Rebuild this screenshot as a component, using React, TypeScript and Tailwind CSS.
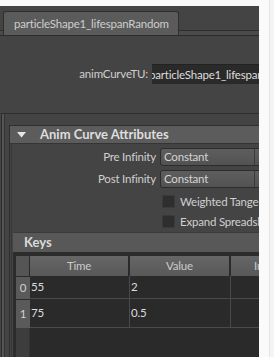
import React from "react";

const T = "text-[11.5px] tracking-[-0.2px]";

function Dropdown({ value }: { value: string }) {
  return (
    <div className="relative w-[120px] h-[18px] shrink-0 rounded-[3px] border border-[#2c2c2c] bg-gradient-to-b from-[#5e5e5e] to-[#525252] flex items-center">
      <span className="pl-[3px] text-[11.5px] tracking-[-0.2px] text-[#d4d4d4] leading-none">{value}</span>
      <div className="absolute left-[93px] top-0 bottom-0 w-px bg-[#3a3a3a]" />
      <svg className="absolute left-[96px] top-[6px]" width="5" height="6" viewBox="0 0 5 6">
        <path d="M2.5 0 L2.5 6" stroke="#cfcfcf" strokeWidth="1" />
      </svg>
    </div>
  );
}

function Checkbox({ label }: { label: string }) {
  return (
    <div className="flex items-center h-[13px]">
      <div className="w-[150px] shrink-0" />
      <div className="w-[13px] h-[13px] bg-[#2e2e2e] border border-[#3a3a3a] rounded-[1px] shrink-0" />
      <span className="ml-[5px] text-[11.5px] tracking-[-0.2px] text-[#d0d0d0] whitespace-nowrap leading-none">{label}</span>
    </div>
  );
}

export default function App() {
  return (
    <div className="w-[274px] h-[357px] bg-[#f9f9f9] flex overflow-hidden font-['Lato',sans-serif]">
      <div className="w-[259px] h-[351px] mt-[6px] bg-[#444444] flex flex-col overflow-hidden shrink-0">
        {/* tab strip */}
        <div className="h-[30px] flex items-end border-b border-[#2b2b2b] shrink-0">
          <div className="w-[3px] h-[5px] bg-[#4b4b4b] border-t border-[#2d2d2d]" />
          <div className="w-[176px] h-[24px] bg-[#5b5b5b] rounded-t-[3px] border border-b-0 border-[#2f2f2f] flex items-center pl-[10px]">
            <span className="text-[11.5px] tracking-[-0.2px] text-[#cdcdcd] whitespace-nowrap leading-none">particleShape1_lifespanRandom</span>
          </div>
          <div className="flex-1 h-[5px] bg-[#4b4b4b] border-t border-[#2d2d2d]" />
        </div>

        {/* animCurveTU row */}
        <div className="mt-[28px] flex items-center h-[20px] shrink-0">
          <div className="w-[148px] shrink-0 text-right text-[11.5px] tracking-[-0.2px] text-[#cfcfcf] whitespace-nowrap">animCurveTU:</div>
          <div className="ml-[4px] w-[120px] h-[20px] shrink-0 bg-[#2a2a2a] border-t border-[#222] overflow-hidden flex items-center">
            <span className="ml-[-3px] text-[11.5px] tracking-[-0.2px] text-[#dedede] whitespace-nowrap leading-none">particleShape1_lifespanRandom</span>
          </div>
        </div>

        {/* outer frame */}
        <div className="mt-[29px] ml-[1px] flex-1 border-t border-l border-[#2e2e2e] flex flex-col">
          <div className="flex-1 border-l-2 border-[#555555] flex flex-col">
            <div className="flex-1 border-l border-[#333333] pl-[4px] pt-[11px] flex flex-col">
              {/* Anim Curve Attributes section */}
              <div className="flex-1 border-l border-t border-[#2f2f2f] flex flex-col">
                <div className="h-[18px] bg-[#5c5c5c] border-b border-[#353535] flex items-center shrink-0">
                  <svg className="ml-[7px]" width="9" height="6" viewBox="0 0 9 6">
                    <path d="M0 0 L9 0 L4.5 5.5 Z" fill="#e6e6e6" />
                  </svg>
                  <span className="ml-[14px] text-[13px] font-bold text-[#dedede] whitespace-nowrap leading-none">Anim Curve Attributes</span>
                </div>
                <div className="flex-1 ml-[1px] border-l border-[#383838] flex flex-col">
                  <div className="mt-[4px] flex items-center">
                    <div className={`w-[144px] shrink-0 text-right ${T} text-[#d0d0d0] whitespace-nowrap`}>Pre Infinity</div>
                    <div className="ml-[4px]"><Dropdown value="Constant" /></div>
                  </div>
                  <div className="mt-[4px] flex items-center">
                    <div className={`w-[144px] shrink-0 text-right ${T} text-[#d0d0d0] whitespace-nowrap`}>Post Infinity</div>
                    <div className="ml-[4px]"><Dropdown value="Constant" /></div>
                  </div>
                  <div className="mt-[7px]"><Checkbox label="Weighted Tangents" /></div>
                  <div className="mt-[7px]"><Checkbox label="Expand Spreadsheet" /></div>

                  {/* Keys section */}
                  <div className="mt-[4px] ml-[1px] flex-1 flex flex-col">
                    <div className="h-[20px] bg-[#585858] border-t border-[#3a3a3a] flex items-center shrink-0">
                      <span className="ml-[11px] text-[13px] font-bold text-[#dadada] leading-none">Keys</span>
                    </div>
                    <div className="flex-1 bg-[#2a2a2a] border-t-[4px] border-l-[3px] border-[#2c2c2c] flex flex-col overflow-hidden">
                      {/* header */}
                      <div className="flex h-[20px] shrink-0">
                        <div className="w-[14px] shrink-0 bg-[#555555] border-r border-[#2a2a2a]" />
                        <div className={`w-[100px] shrink-0 bg-gradient-to-b from-[#666666] to-[#585858] border-r-2 border-[#2a2a2a] flex items-center justify-center ${T} text-[#cbcbcb]`}>Time</div>
                        <div className={`w-[101px] shrink-0 bg-gradient-to-b from-[#666666] to-[#585858] border-r-2 border-[#2a2a2a] flex items-center justify-center ${T} text-[#cbcbcb]`}>Value</div>
                        <div className={`w-[100px] shrink-0 bg-gradient-to-b from-[#666666] to-[#585858] flex items-center pl-[23px] ${T} text-[#cbcbcb]`}>In</div>
                      </div>
                      {[
                        { i: "0", t: "55", v: "2", h: "h-[23px]" },
                        { i: "1", t: "75", v: "0.5", h: "h-[29px]" },
                      ].map((r) => (
                        <div key={r.i} className={`flex shrink-0 ${r.h}`}>
                          <div className={`w-[14px] shrink-0 bg-[#5a5a5a] border-t border-[#2a2a2a] flex items-center justify-center ${T} text-[#d0d0d0]`}>{r.i}</div>
                          <div className={`w-[100px] shrink-0 border-r border-b border-[#4a4a4a] flex items-center pl-[1px] ${T} text-[#dcdcdc]`}>{r.t}</div>
                          <div className={`w-[101px] shrink-0 border-r border-b border-[#4a4a4a] flex items-center pl-[1px] ${T} text-[#dcdcdc]`}>{r.v}</div>
                          <div className="w-[100px] shrink-0 border-b border-[#4a4a4a]" />
                        </div>
                      ))}
                      <div className="flex flex-1">
                        <div className="w-[14px] shrink-0 bg-[#3d3d3d] border-r border-[#333]" />
                        <div className="flex-1" />
                      </div>
                    </div>
                  </div>
                </div>
              </div>
            </div>
          </div>
        </div>
      </div>
      <div className="w-[10px] shrink-0 bg-[#fafafa]" />
      <div className="w-px shrink-0 bg-[#e3e3e3]" />
      <div className="flex-1 bg-[#f4f4f4]" />
    </div>
  );
}
